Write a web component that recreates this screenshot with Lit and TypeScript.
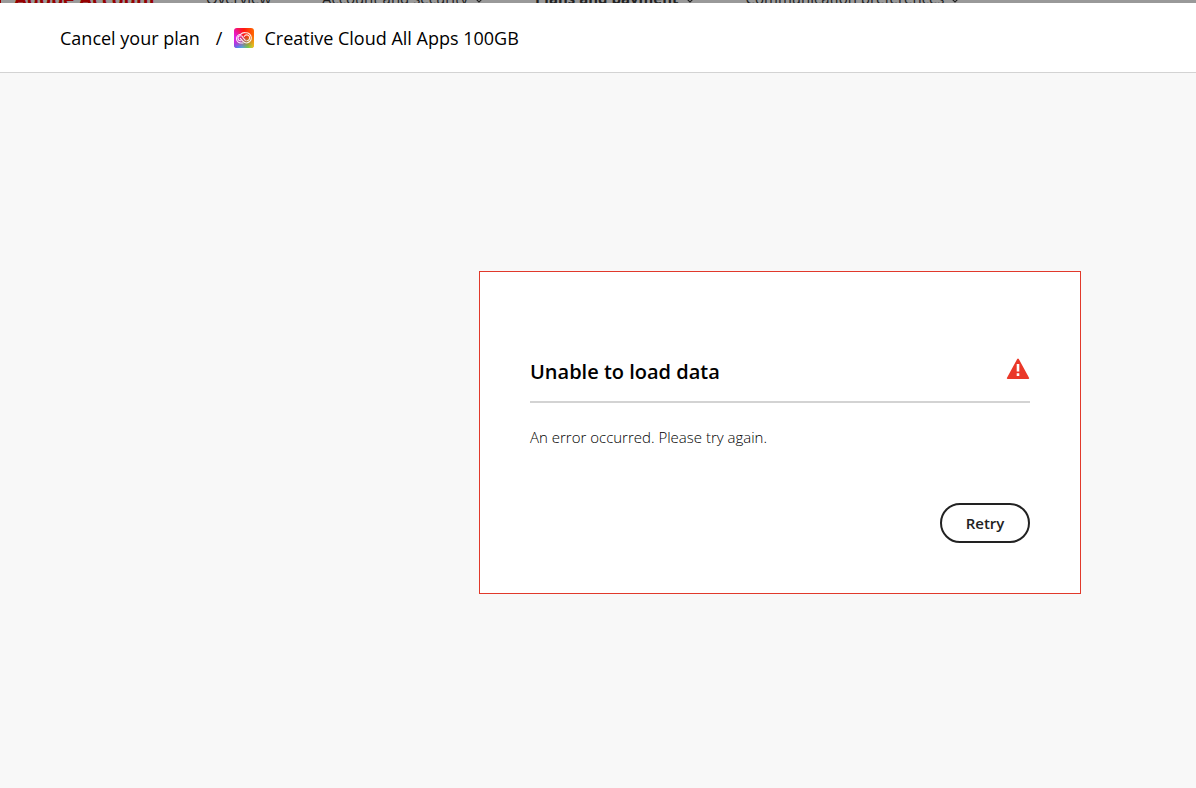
import { LitElement, html, css, svg } from "lit";
import { customElement } from "lit/decorators.js";

interface NavItem {
  label: string;
  menu: boolean;
  current: boolean;
}

const NAV: NavItem[] = [
  { label: "Overview", menu: false, current: false },
  { label: "Account and security", menu: true, current: false },
  { label: "Plans and payment", menu: true, current: true },
  { label: "Communication preferences", menu: true, current: false },
];

const chevron = svg`<path d="M1 1 5 5 9 1" fill="none" stroke="currentColor" stroke-width="1.2"/>`;

@customElement("account-bar")
class AccountBar extends LitElement {
  static styles = css`
    :host {
      display: flex;
      align-items: flex-end;
      height: 3px;
      overflow: hidden;
      background: #999;
      color: #222;
      font-size: 15px;
      line-height: 10px;
      white-space: nowrap;
    }
    .brand {
      flex: none;
      width: 206px;
      box-sizing: border-box;
      border-left: 1px solid #960000;
      padding-left: 13px;
      color: #960000;
      font-size: 19px;
      line-height: 8px;
      font-weight: 700;
      text-decoration: none;
    }
    nav {
      display: flex;
      gap: 51px;
    }
    .item {
      display: flex;
      align-items: flex-end;
      gap: 6px;
      color: inherit;
      text-decoration: none;
    }
    .current {
      font-weight: 700;
    }
  `;

  render() {
    return html`
      <a class="brand" href="#">Adobe Account</a>
      <nav>
        ${NAV.map(
          (n) => html`<a class="item ${n.current ? "current" : ""}" href="#"
            >${n.label}${n.menu
              ? html`<svg width="10" height="6" viewBox="0 0 10 6" aria-hidden="true">${chevron}</svg>`
              : ""}</a
          >`
        )}
      </nav>
    `;
  }
}

@customElement("error-card")
class ErrorCard extends LitElement {
  static styles = css`
    :host {
      display: block;
      box-sizing: border-box;
      width: 100%;
      max-width: 602px;
      padding: 82px 50px 50px;
      border: 1px solid #e1392b;
      background: #fff;
    }
    .head {
      display: flex;
      justify-content: space-between;
      align-items: flex-start;
      padding-bottom: 11px;
      border-bottom: 2px solid #d3d3d3;
    }
    h2 {
      margin: 0;
      color: #000;
      font-size: 20px;
      line-height: 36px;
      font-weight: 600;
    }
    .alert {
      flex: none;
      margin-top: 4px;
    }
    p {
      margin: 24px 0 56px;
      color: #000;
      font-size: 15px;
      line-height: 20px;
      font-weight: 300;
    }
    .actions {
      display: flex;
      justify-content: flex-end;
    }
    button {
      min-width: 90px;
      height: 40px;
      border: 2px solid #222;
      border-radius: 20px;
      background: #fff;
      color: #222;
      font: inherit;
      font-size: 15px;
      font-weight: 600;
    }
  `;

  render() {
    return html`
      <div class="head">
        <h2>Unable to load data</h2>
        <svg class="alert" width="24" height="22" viewBox="0 0 24 22" role="img" aria-label="Error">
          <path d="M11.2 1.1a.9.9 0 0 1 1.6 0L23 19.7a.9.9 0 0 1-.8 1.3H1.8a.9.9 0 0 1-.8-1.3z" fill="#ea3829" />
          <path d="M10.7 6h2.6v7.4h-2.6zM10.7 15.3h2.6v2.6h-2.6z" fill="#fff" />
        </svg>
      </div>
      <p>An error occurred. Please try again.</p>
      <div class="actions"><button type="button">Retry</button></div>
    `;
  }
}

@customElement("app-root")
class AppRoot extends LitElement {
  static styles = css`
    :host {
      display: flex;
      flex-direction: column;
      min-height: 100vh;
      background: #f8f8f8;
      font-family: "Open Sans", "Noto Sans", sans-serif;
    }
    header {
      display: flex;
      align-items: center;
      padding: 21px 60px 20px;
      border-bottom: 1px solid #d3d3d3;
      background: #fff;
      color: #000;
      font-size: 18px;
      line-height: 28px;
      white-space: nowrap;
    }
    .slash {
      margin: 0 12px 0 16px;
    }
    .logo {
      flex: none;
      margin-right: 10px;
    }
    main {
      flex: 1;
      display: flex;
      justify-content: flex-end;
      align-items: center;
      padding: 4px 115px 0;
    }
  `;

  render() {
    return html`
      <account-bar></account-bar>
      <header>
        <span>Cancel your plan</span>
        <span class="slash">/</span>
        <svg class="logo" width="20" height="20" viewBox="0 0 20 20" aria-hidden="true">
          <defs>
            <linearGradient id="top" x1="0" y1="0" x2="1" y2="0">
              <stop offset="0" stop-color="#f0108c" />
              <stop offset=".5" stop-color="#ff1a10" />
              <stop offset="1" stop-color="#ff6a00" />
            </linearGradient>
            <linearGradient id="bottom" x1="0" y1="0" x2="1" y2="0">
              <stop offset="0" stop-color="#4a6cff" />
              <stop offset=".4" stop-color="#4fa8e8" />
              <stop offset=".7" stop-color="#6ccf50" />
              <stop offset="1" stop-color="#f4d020" />
            </linearGradient>
            <linearGradient id="fade" x1="0" y1="0" x2="0" y2="1">
              <stop offset=".35" stop-color="#000" />
              <stop offset="1" stop-color="#fff" />
            </linearGradient>
            <radialGradient id="violet" cx="0" cy=".5" r=".5">
              <stop offset="0" stop-color="#e020f0" />
              <stop offset="1" stop-color="#e020f0" stop-opacity="0" />
            </radialGradient>
            <mask id="m"><rect width="20" height="20" fill="url(#fade)" /></mask>
          </defs>
          <rect width="20" height="20" rx="3" fill="url(#top)" />
          <rect width="20" height="20" rx="3" fill="url(#bottom)" mask="url(#m)" />
          <rect width="20" height="20" rx="3" fill="url(#violet)" />
          <g fill="none" stroke="#fff" stroke-width="1.1" stroke-linecap="round" stroke-opacity=".9">
            <path d="M9 15H7a4.3 4.3 0 0 1-.4-8.6A5.2 5.2 0 0 1 11.8 4.8a5.1 5.1 0 0 1 .8 10.2c-1.7 0-2.7-.7-3.8-1.900L6.300 10.300" />
            <path d="M12.800 12.700a2.900 2.900 0 1 0-2.600-4.300M11.300 12.300 8.900 9.600A2.500 2.500 0 1 0 7 12.700" />
          </g>
        </svg>
        <span>Creative Cloud All Apps 100GB</span>
      </header>
      <main><error-card></error-card></main>
    `;
  }
}
